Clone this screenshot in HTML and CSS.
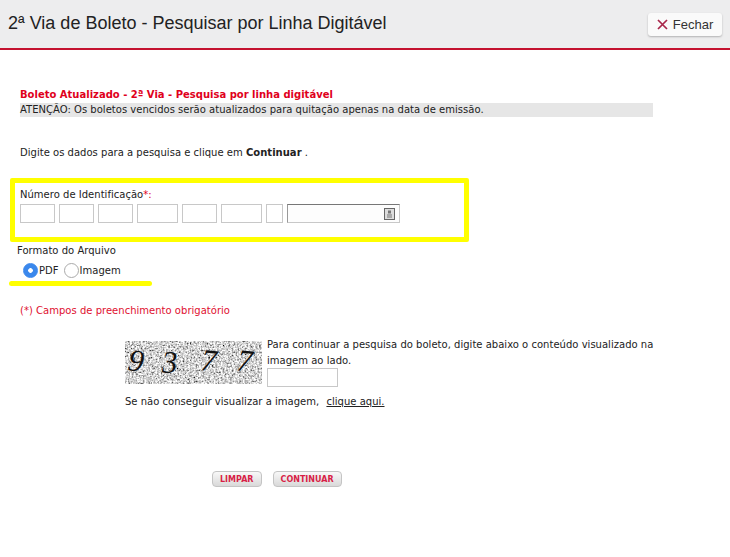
FILE: index.html
```html
<!DOCTYPE html>
<html lang="pt-BR">
<head>
    <meta charset="UTF-8">
    <meta name="viewport" content="width=device-width, initial-scale=1.0">
    <title>2ª Via de Boleto</title>
    <link rel="stylesheet" href="styles.css">
</head>
<body>

<header class="topbar">
    <h1 class="topbar-title">2ª Via de Boleto - Pesquisar por Linha Digitável</h1>
    <button type="button" class="close-btn">
        <svg class="close-icon" width="11" height="11" viewBox="0 0 11 11"><path d="M1 1L10 10M10 1L1 10"/></svg>
        Fechar
    </button>
</header>

<main class="content">
    <h2 class="page-title">Boleto Atualizado - 2ª Via - Pesquisa por linha digitável</h2>
    <p class="notice">ATENÇÃO: Os boletos vencidos serão atualizados para quitação apenas na data de emissão.</p>
    <p class="intro">Digite os dados para a pesquisa e clique em <b>Continuar</b> .</p>

    <!-- Campos da linha digitavel -->
    <div class="mark-box">
        <label class="field-label">Número de Identificação<span class="req">*:</span></label>
        <div class="code-row">
            <input type="text" class="code w35">
            <input type="text" class="code w35">
            <input type="text" class="code w35">
            <input type="text" class="code w41">
            <input type="text" class="code w35">
            <input type="text" class="code w41">
            <input type="text" class="code w17">
            <div class="code-value">
                <svg class="value-icon" width="11" height="12" viewBox="0 0 11 12"><rect x="0.5" y="0.5" width="10" height="11" fill="#ddd" stroke="#666"/><path d="M4 2.5h3v3H4zM3 6.5h5v1H3zM3 8.5h5v1H3z" fill="#777"/></svg>
            </div>
        </div>
    </div>

    <div class="format">
        <div class="format-title">Formato do Arquivo</div>
        <div class="radios">
            <span class="radio radio-on"></span><span class="radio-text">PDF</span>
            <span class="radio"></span><span class="radio-text">Imagem</span>
        </div>
    </div>
    <div class="mark-line"></div>

    <p class="required">(*) Campos de preenchimento obrigatório</p>

    <!-- Captcha -->
    <div class="captcha">
        <div class="captcha-row">
            <svg class="captcha-img" width="137" height="43" viewBox="0 0 137 43">
                <filter id="noise" x="0" y="0" width="100%" height="100%">
                    <feTurbulence type="fractalNoise" baseFrequency="0.55" numOctaves="3" seed="4"/>
                    <feColorMatrix type="matrix" values="1.9 0 0 0 -0.3 1.9 0 0 0 -0.3 1.9 0 0 0 -0.3 0 0 0 0 1"/>
                    <feGaussianBlur stdDeviation="0.35"/>
                </filter>
                <rect width="137" height="43" filter="url(#noise)"/>
                <text class="captcha-digit" x="3" y="30" transform="rotate(8 10 22)">9</text>
                <text class="captcha-digit" x="37" y="32">3</text>
                <text class="captcha-digit" x="76" y="30" transform="rotate(6 84 20)">7</text>
                <text class="captcha-digit" x="112" y="30" transform="rotate(6 119 20)">7</text>
            </svg>
            <div class="captcha-side">
                <p class="captcha-text">Para continuar a pesquisa do boleto, digite abaixo o conteúdo visualizado na imagem ao lado.</p>
                <input type="text" class="captcha-input">
            </div>
        </div>
        <p class="captcha-help">Se não conseguir visualizar a imagem, <a href="#" class="help-link">clique aqui.</a></p>
    </div>

    <div class="actions">
        <button type="button" class="action-btn">LIMPAR</button>
        <button type="button" class="action-btn">CONTINUAR</button>
    </div>
</main>

</body>
</html>
```

FILE: styles.css
```css
* {
    box-sizing: border-box;
}
body {
    margin: 0;
    background: #fff;
    color: #222;
    font-family: "DejaVu Sans", Verdana, sans-serif;
    font-size: 10px;
    letter-spacing: 0.02px;
}
p, h1, h2 {
    margin: 0;
}

/* Barra superior */
.topbar {
    height: 50px;
    padding: 0 8px 2px 8px;
    display: flex;
    align-items: center;
    justify-content: space-between;
    background: #ededee;
    border-bottom: 2px solid #c4122f;
    letter-spacing: 0;
}
.topbar-title {
    font-family: "Liberation Sans", Arial, sans-serif;
    font-size: 18px;
    font-weight: normal;
    color: #222;
}
.close-btn {
    width: 74px;
    height: 23px;
    margin-top: 2px;
    padding: 0;
    display: flex;
    align-items: center;
    justify-content: center;
    gap: 5px;
    background: #fafafa;
    border: 0;
    border-radius: 3px;
    box-shadow: 0 1px 2px rgba(0,0,0,0.25);
    font-family: "Liberation Sans", Arial, sans-serif;
    font-size: 13px;
    color: #333;
}
.close-icon path {
    fill: none;
    stroke: #a8264a;
    stroke-width: 1.7;
}

/* Conteudo */
.content {
    padding: 38px 0 0 20px;
}
.page-title {
    font-size: 10px;
    line-height: 13px;
    font-weight: bold;
    color: #e0001b;
    letter-spacing: 0;
}
.notice {
    width: 633px;
    height: 14px;
    margin-top: 2px;
    line-height: 14px;
    background: #e6e6e6;
}
.intro {
    margin-top: 29px;
    line-height: 14px;
}

/* Marcacoes amarelas */
.mark-box {
    width: 459px;
    height: 64px;
    margin: 18px 0 0 -10px;
    padding: 5px 0 0 5px;
    border: 5px solid #ffff00;
    border-radius: 2px;
}
.mark-line {
    width: 143px;
    height: 5px;
    margin: 4px 0 0 -11px;
    background: #ffff00;
    border-radius: 3px;
}

.field-label {
    display: block;
    line-height: 13px;
}
.req {
    color: #e0001b;
}
.code-row {
    display: flex;
    gap: 4px;
    margin-top: 3px;
}
.code {
    height: 19px;
    padding: 0;
    background: #fff;
    border: 1px solid #c8c8c8;
}
.w35 { width: 35px; }
.w41 { width: 41px; }
.w17 { width: 17px; }
.code-value {
    width: 113px;
    height: 19px;
    padding-right: 4px;
    display: flex;
    align-items: center;
    justify-content: flex-end;
    background: #fdfdfd;
    border: 1px solid #c8c8c8;
    border-top-color: #777;
    border-left-color: #999;
}

.format {
    margin: 2px 0 0 -3px;
}
.format-title {
    line-height: 13px;
}
.radios {
    display: flex;
    align-items: center;
    height: 16px;
    margin: 5px 0 0 6px;
}
.radio {
    width: 15px;
    height: 15px;
    border-radius: 50%;
    background: #fff;
    border: 1px solid #aaa;
}
.radio-on {
    background: radial-gradient(circle, #fff 0 2px, #3b88ec 2.6px);
    border-color: #3b88ec;
}
.radio-text {
    margin: 0 4px 0 1px;
}
.radio + .radio-text + .radio {
    margin-left: 1px;
}
.radio-text:last-child {
    margin-left: 1px;
}
.mark-line {
    margin-top: 3px;
}
.required {
    margin-top: 18px;
    line-height: 13px;
    color: #e0102f;
}

/* Captcha */
.captcha {
    margin: 23px 0 0 105px;
}
.captcha-row {
    display: flex;
    gap: 5px;
}
.captcha-img {
    flex: none;
    display: block;
    margin-top: 1px;
}
.captcha-digit {
    font-family: "Liberation Serif", "Times New Roman", serif;
    font-style: italic;
    font-size: 31px;
    fill: #111;
}
.captcha-side {
    width: 395px;
}
.captcha-text {
    line-height: 16px;
    margin-top: -3px;
}
.captcha-input {
    display: block;
    width: 71px;
    height: 19px;
    margin-top: -1px;
    padding: 0;
    background: #fff;
    border: 1px solid #c8c8c8;
}
.captcha-help {
    margin-top: 8px;
    line-height: 13px;
}
.help-link {
    margin-left: 4px;
    color: #222;
}

/* Botoes */
.actions {
    display: flex;
    gap: 11px;
    margin: 63px 0 0 192px;
}
.action-btn {
    height: 16px;
    padding: 0 7px;
    background: linear-gradient(#f8f8f8, #d9d9d9);
    border: 1px solid #c4c4c4;
    border-radius: 4px;
    font-family: "DejaVu Sans", Verdana, sans-serif;
    font-size: 8px;
    font-weight: bold;
    color: #d81e46;
}
```
